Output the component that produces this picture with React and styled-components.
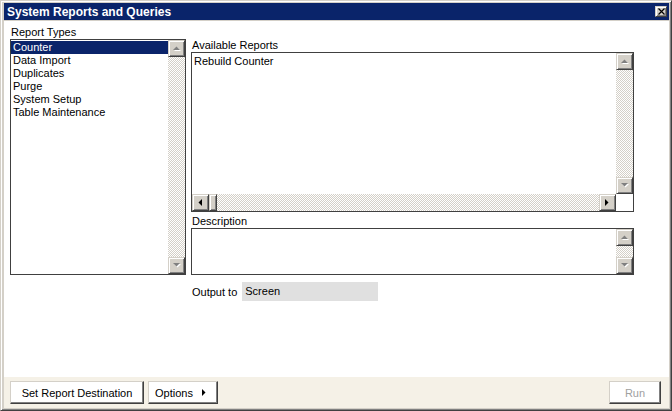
import React from 'react';
import styled, { createGlobalStyle, css } from 'styled-components';

const GlobalStyle = createGlobalStyle`
  html, body { margin: 0; padding: 0; background: #fff; }
  body {
    font-family: "Liberation Sans", Arial, sans-serif;
    font-size: 11px;
    color: #000;
  }
  * { box-sizing: border-box; }
`;

const raised = css`
  background: #d4d0c8;
  border: 1px solid;
  border-color: #d4d0c8 #404040 #404040 #d4d0c8;
  box-shadow: inset 1px 1px #fff, inset -1px -1px #808080;
`;

const Window = styled.div`
  width: 672px;
  height: 411px;
  display: flex;
  flex-direction: column;
  gap: 1px;
  padding: 2px 2px 2px 3px;
  ${raised};
`;

const TitleBar = styled.div`
  height: 17px;
  flex: none;
  display: flex;
  align-items: center;
  justify-content: space-between;
  padding: 0 2px 0 3px;
  background: #0a246a;
  color: #fff;
  font-size: 12px;
  font-weight: bold;
`;

const CloseButton = styled.div`
  width: 12px;
  height: 11px;
  display: flex;
  align-items: center;
  justify-content: center;
  ${raised};
`;

const Main = styled.div`
  flex: 1;
  display: flex;
  flex-direction: column;
`;

const Body = styled.div`
  flex: 1;
  display: flex;
  gap: 5px;
  padding: 5px 0 0 6px;
  background: #fff;
`;

const Column = styled.div`
  display: flex;
  flex-direction: column;
  width: ${p => p.$width}px;
  margin-top: ${p => p.$top || 0}px;
`;

const Label = styled.div`
  height: 13px;
  line-height: 13px;
  padding-left: ${p => p.$indent || 0}px;
  margin-top: ${p => p.$top || 0}px;
`;

const Box = styled.div`
  height: ${p => p.$height}px;
  border: 1px solid #404040;
  display: flex;
  background: #fff;
`;

const Items = styled.div`
  flex: 1;
  padding-top: ${p => p.$pad}px;
`;

const Item = styled.div`
  height: 13px;
  line-height: 13px;
  padding-left: 2px;
  white-space: nowrap;
  ${p => p.$selected && css`
    background: #0a246a;
    color: #fff;
  `}
`;

const ScrollBar = styled.div`
  display: flex;
  flex-direction: ${p => (p.$horizontal ? 'row' : 'column')};
  ${p => (p.$horizontal ? 'height: 17px;' : 'width: 17px;')}
  flex: none;
  background: repeating-conic-gradient(#d4d0c8 0 25%, #fff 0 50%) 0 0 / 2px 2px;
`;

const Track = styled.div`
  flex: 1;
`;

const ArrowButton = styled.div`
  width: 17px;
  height: 17px;
  flex: none;
  display: flex;
  align-items: center;
  justify-content: center;
  ${raised};
`;

const Thumb = styled.div`
  width: 8px;
  height: 17px;
  ${raised};
`;

const ReportsGrid = styled.div`
  flex: 1;
  display: grid;
  grid-template-columns: 1fr 17px;
  grid-template-rows: 1fr 17px;
`;

const Corner = styled.div`
  background: #fff;
`;

const OutputRow = styled.div`
  display: flex;
  align-items: center;
  gap: 5px;
  margin-top: 7px;
  padding-left: 1px;
  height: 19px;
`;

const Field = styled.div`
  width: 136px;
  height: 19px;
  line-height: 19px;
  padding-left: 3px;
  background: #e0e0e0;
`;

const Footer = styled.div`
  height: 31px;
  flex: none;
  display: flex;
  align-items: center;
  gap: 4px;
  padding: 0 8px 0 6px;
  background: #f5f1e7;
`;

const Button = styled.div`
  width: ${p => p.$width}px;
  height: 23px;
  display: flex;
  align-items: center;
  justify-content: ${p => (p.$split ? 'space-between' : 'center')};
  padding: ${p => (p.$split ? '0 10px 0 6px' : '0')};
  background: #fff;
  border: 1px solid;
  border-color: #d4d0c8 #404040 #404040 #d4d0c8;
  box-shadow: inset -1px -1px #808080;
  color: ${p => (p.$disabled ? '#a0a0a0' : '#000')};
  ${p => p.$right && 'margin-left: auto;'}
`;

const Arrow = ({ dir, disabled }) => {
  const fill = disabled ? '#808080' : '#000';
  const shapes = {
    up: '0,4 7,4 3.5,0.5',
    down: '0,0 7,0 3.5,3.5',
    left: '4,0 4,7 0.5,3.5',
    right: '0,0 0,7 3.5,3.5',
  };
  const vertical = dir === 'up' || dir === 'down';
  const w = vertical ? 7 : 4;
  const h = vertical ? 4 : 7;
  return (
    <svg width={w + 1} height={h + 1} viewBox={`0 0 ${w + 1} ${h + 1}`}>
      {disabled && <polygon points={shapes[dir]} fill="#fff" transform="translate(1,1)" />}
      <polygon points={shapes[dir]} fill={fill} />
    </svg>
  );
};

const VScroll = () => (
  <ScrollBar>
    <ArrowButton><Arrow dir="up" disabled /></ArrowButton>
    <Track />
    <ArrowButton><Arrow dir="down" disabled /></ArrowButton>
  </ScrollBar>
);

const reportTypes = ['Counter', 'Data Import', 'Duplicates', 'Purge', 'System Setup', 'Table Maintenance'];

export default function App() {
  return (
    <>
      <GlobalStyle />
      <Window>
        <TitleBar>
          <span>System Reports and Queries</span>
          <CloseButton>
            <svg width="7" height="7" viewBox="0 0 7 7">
              <path d="M0.5 0.5 L6.5 6.5 M6.5 0.5 L0.5 6.5" stroke="#000" strokeWidth="1.2" />
            </svg>
          </CloseButton>
        </TitleBar>
        <Main>
          <Body>
            <Column $width={176}>
              <Label $indent={1}>Report Types</Label>
              <Box $height={236}>
                <Items $pad={1}>
                  {reportTypes.map((t, i) => (
                    <Item key={t} $selected={i === 0}>{t}</Item>
                  ))}
                </Items>
                <VScroll />
              </Box>
            </Column>
            <Column $width={443} $top={13}>
              <Label $indent={1}>Available Reports</Label>
              <Box $height={160}>
                <ReportsGrid>
                  <Items $pad={2}>
                    <Item>Rebuild Counter</Item>
                  </Items>
                  <VScroll />
                  <ScrollBar $horizontal>
                    <ArrowButton><Arrow dir="left" /></ArrowButton>
                    <Thumb />
                    <Track />
                    <ArrowButton><Arrow dir="right" /></ArrowButton>
                  </ScrollBar>
                  <Corner />
                </ReportsGrid>
              </Box>
              <Label $top={3} $indent={1}>Description</Label>
              <Box $height={47}>
                <Items $pad={0} />
                <VScroll />
              </Box>
              <OutputRow>
                <span>Output to</span>
                <Field>Screen</Field>
              </OutputRow>
            </Column>
          </Body>
          <Footer>
            <Button $width={134}>Set Report Destination</Button>
            <Button $width={70} $split>
              <span>Options</span>
              <Arrow dir="right" />
            </Button>
            <Button $width={52} $right $disabled>Run</Button>
          </Footer>
        </Main>
      </Window>
    </>
  );
}
